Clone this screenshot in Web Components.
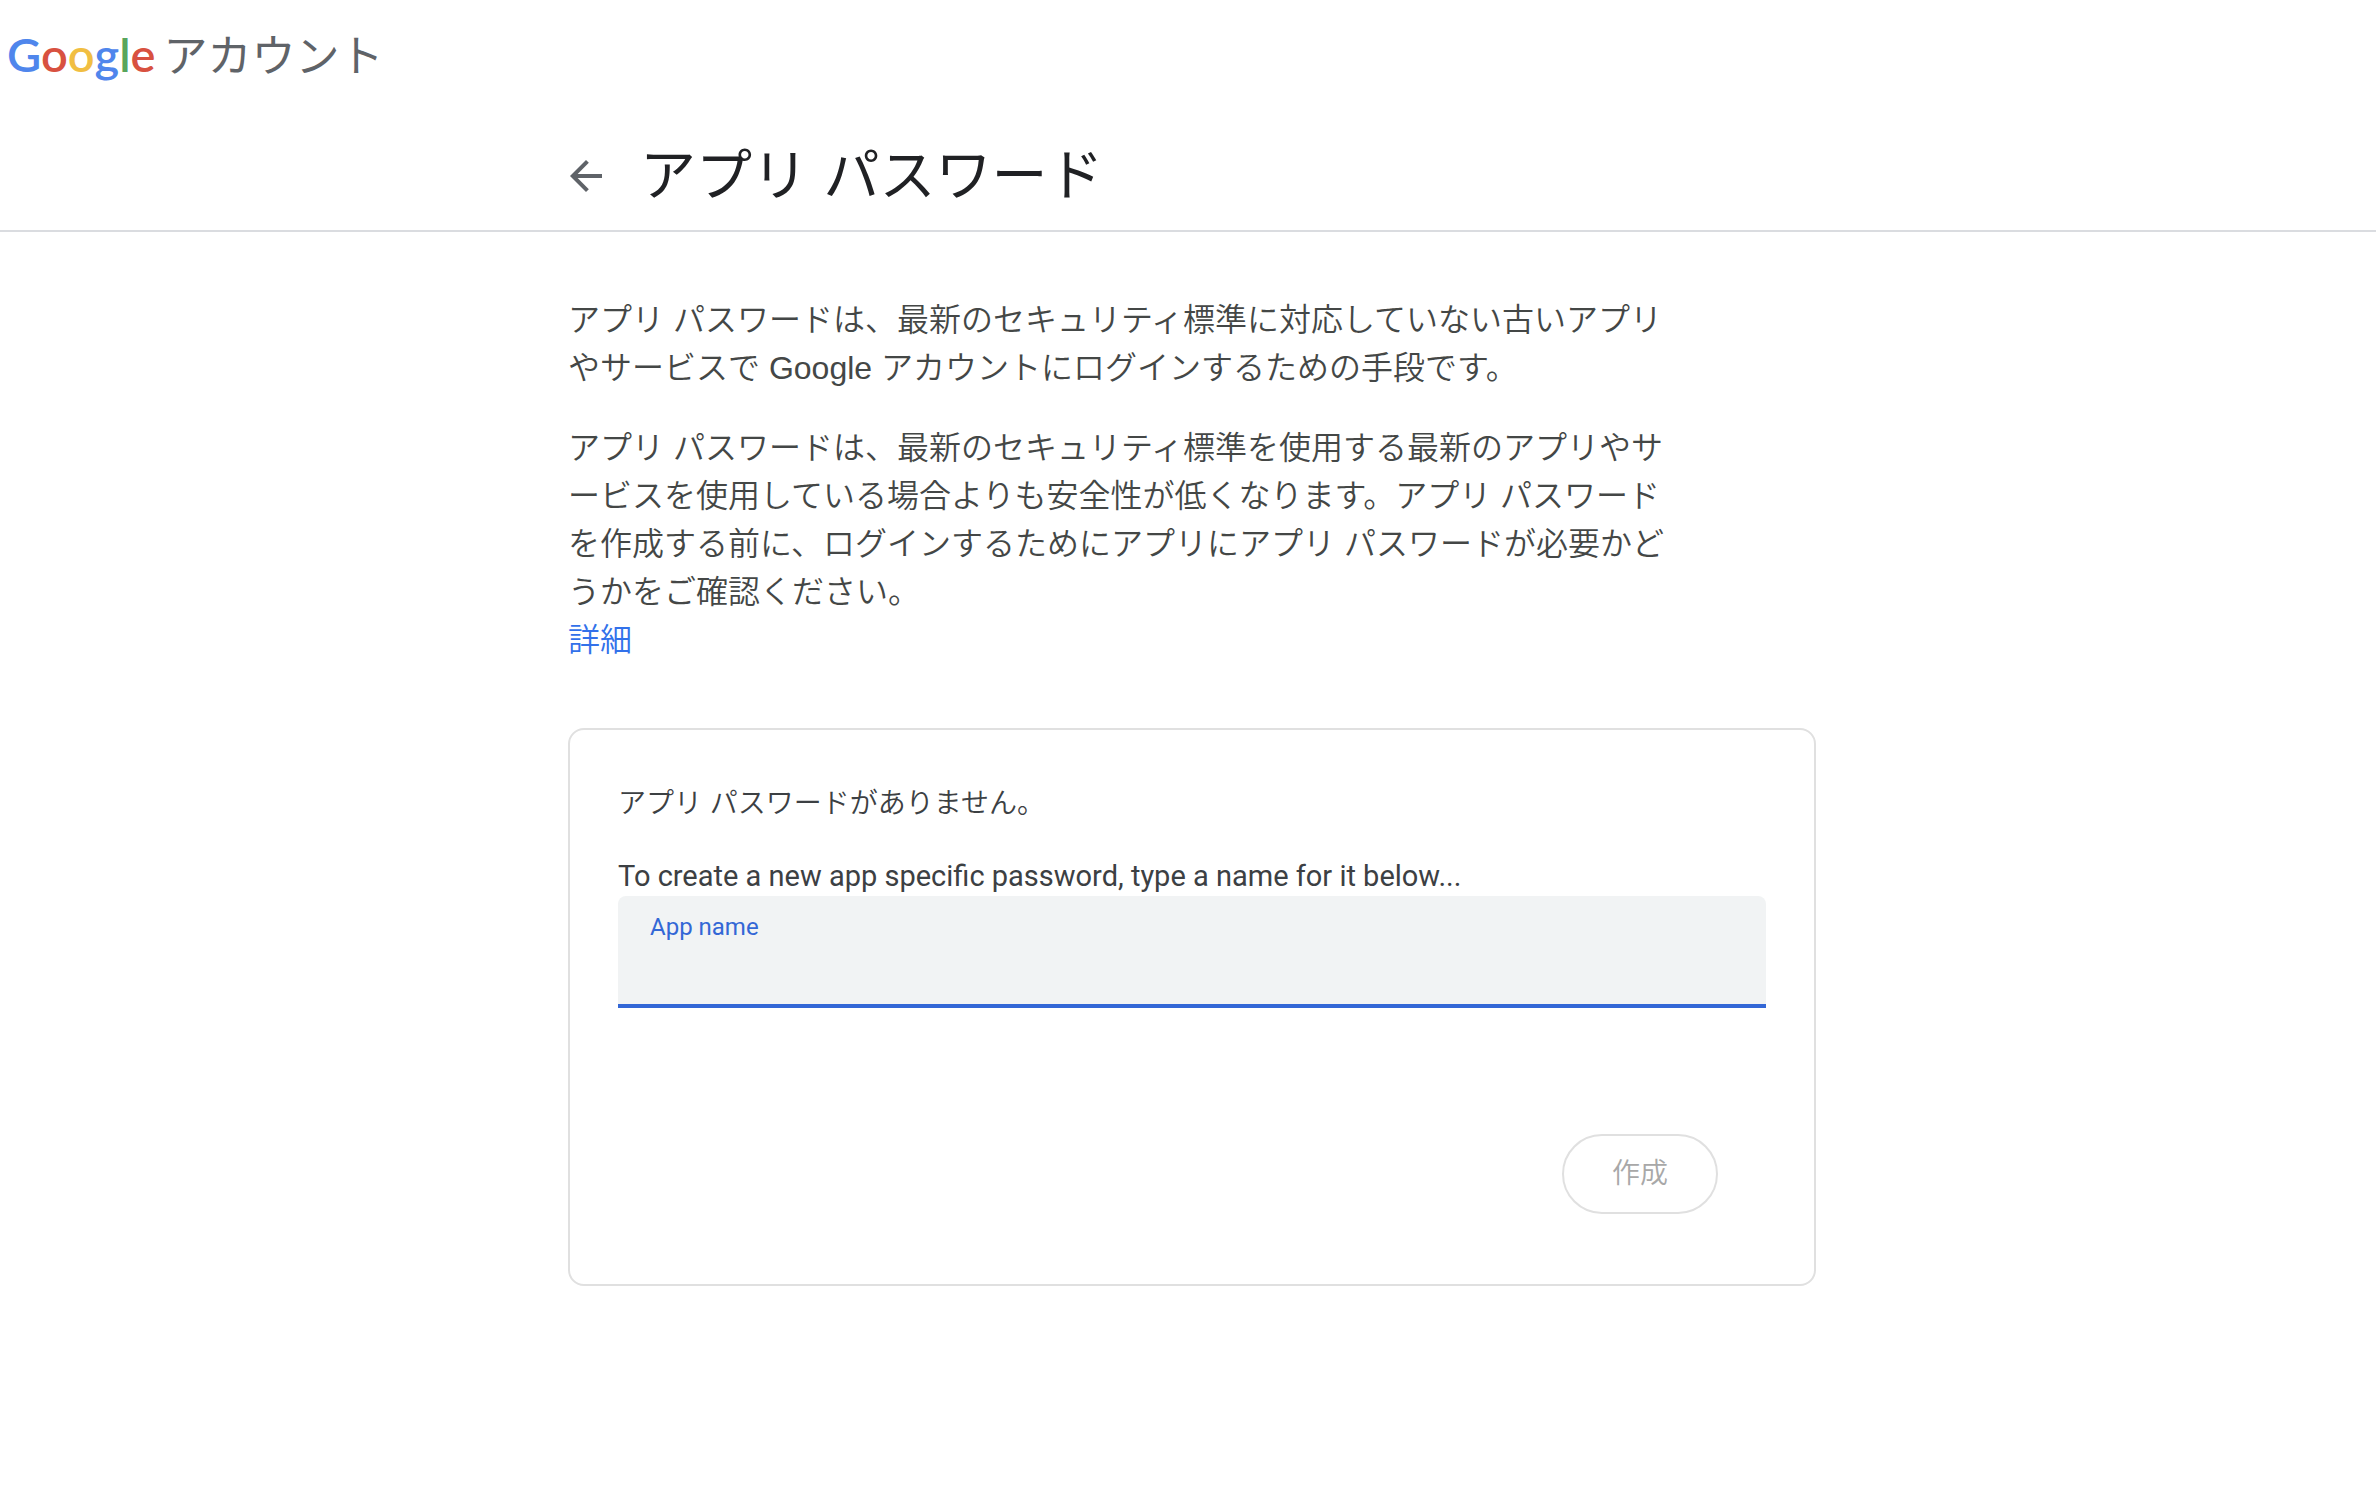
<!DOCTYPE html>
<html lang="ja">
<head>
<meta charset="utf-8">
<meta name="viewport" content="width=device-width, initial-scale=1">
<title>アプリ パスワード</title>
<style>
body {
  margin: 0;
  background: #fff;
  color: #444746;
  font-family: "Liberation Sans", "Noto Sans CJK JP", sans-serif;
  font-weight: 350;
  --color-line: #dadce0;
  --color-border: #e0e0e0;
  --color-accent: #3367d6;
  --column: 1256px;
}
</style>
</head>
<body>
<account-bar>アカウント</account-bar>
<page-heading>アプリ パスワード</page-heading>
<page-column>
  <intro-text>
    <p>アプリ パスワードは、最新のセキュリティ標準に対応していない古いアプリやサービスで Google アカウントにログインするための手段です。</p>
    <p>アプリ パスワードは、最新のセキュリティ標準を使用する最新のアプリやサービスを使用している場合よりも安全性が低くなります。アプリ パスワードを作成する前に、ログインするためにアプリにアプリ パスワードが必要かどうかをご確認ください。</p>
    <a slot="link" href="#details">詳細</a>
  </intro-text>
  <password-card>
    <span slot="status">アプリ パスワードがありません。</span>
    <span slot="hint">To create a new app specific password, type a name for it below...</span>
    <text-field label="App name"></text-field>
    <pill-button slot="action" disabled>作成</pill-button>
  </password-card>
</page-column>

<script>
/**
 * Top bar with the Google wordmark and the product name.
 * @extends HTMLElement
 */
class AccountBar extends HTMLElement {
  constructor() {
    super();
    this.attachShadow({ mode: 'open' });
  }

  connectedCallback() {
    this.shadowRoot.innerHTML = `
      <style>
        :host { display: block; }
        a {
          display: flex;
          align-items: baseline;
          gap: 8px;
          box-sizing: border-box;
          width: max-content;
          height: 112px;
          padding: 22px 7px 0;
          line-height: 64px;
          color: #5f6368;
          text-decoration: none;
        }
        .logo {
          font-family: Lato, sans-serif;
          font-size: 47px;
          font-weight: 600;
        }
        .name {
          font-size: 44px;
          font-weight: 400;
        }
        .blue { color: #4f86ec; }
        .red { color: #d85140; }
        .yellow { color: #f1be42; }
        .green { color: #58a55c; }
      </style>
      <a href="#account">
        <span class="logo"><span class="blue">G</span><span class="red">o</span><span class="yellow">o</span><span class="blue">g</span><span class="green">l</span><span class="red">e</span></span>
        <span class="name"><slot></slot></span>
      </a>`;
  }
}
customElements.define('account-bar', AccountBar);

/**
 * Page title with a back button, above a full width rule.
 * @extends HTMLElement
 */
class PageHeading extends HTMLElement {
  constructor() {
    super();
    this.attachShadow({ mode: 'open' });
  }

  connectedCallback() {
    this.shadowRoot.innerHTML = `
      <style>
        :host {
          display: block;
          border-bottom: 2px solid var(--color-line);
        }
        .row {
          display: flex;
          align-items: center;
          gap: 30px;
          box-sizing: border-box;
          max-width: var(--column);
          margin: 0 auto;
          padding: 16px 0 6px 2px;
        }
        button {
          display: flex;
          padding: 0;
          border: 0;
          background: none;
          color: #5f6368;
          cursor: pointer;
        }
        svg {
          width: 48px;
          height: 48px;
          fill: currentColor;
        }
        h1 {
          margin: 0;
          font-size: 56px;
          font-weight: 400;
          line-height: 96px;
          color: #202124;
        }
      </style>
      <div class="row">
        <button type="button" aria-label="戻る">
          <svg viewBox="0 0 24 24" aria-hidden="true"><path d="M20 11H7.83l5.59-5.59L12 4l-8 8 8 8 1.41-1.41L7.83 13H20v-2z"/></svg>
        </button>
        <h1><slot></slot></h1>
      </div>`;
  }
}
customElements.define('page-heading', PageHeading);

/**
 * Centred column for the page content.
 * @extends HTMLElement
 */
class PageColumn extends HTMLElement {
  constructor() {
    super();
    this.attachShadow({ mode: 'open' });
  }

  connectedCallback() {
    this.shadowRoot.innerHTML = `
      <style>
        :host {
          display: flex;
          flex-direction: column;
          gap: 64px;
          box-sizing: border-box;
          max-width: var(--column);
          margin: 0 auto;
          padding: 64px 0 64px 8px;
        }
      </style>
      <slot></slot>`;
  }
}
customElements.define('page-column', PageColumn);

/**
 * Introduction paragraphs, followed by a link.
 * @extends HTMLElement
 */
class IntroText extends HTMLElement {
  constructor() {
    super();
    this.attachShadow({ mode: 'open' });
  }

  connectedCallback() {
    this.shadowRoot.innerHTML = `
      <style>
        :host {
          display: block;
          max-width: 1104px;
          font-size: 32px;
          line-height: 48px;
          line-break: loose;
        }
        .body {
          display: flex;
          flex-direction: column;
          gap: 32px;
        }
        ::slotted(p) { margin: 0; }
        ::slotted(a) {
          color: #3271ea;
          text-decoration: none;
        }
      </style>
      <div class="body"><slot></slot></div>
      <slot name="link"></slot>`;
  }
}
customElements.define('intro-text', IntroText);

/**
 * Bordered card with the form for a new app password.
 * @extends HTMLElement
 */
class PasswordCard extends HTMLElement {
  constructor() {
    super();
    this.attachShadow({ mode: 'open' });
  }

  connectedCallback() {
    this.shadowRoot.innerHTML = `
      <style>
        :host {
          display: block;
          padding: 48px 48px 70px;
          border: 2px solid var(--color-border);
          border-radius: 16px;
          font-size: 28px;
          color: #3c4043;
        }
        p { margin: 0; }
        .status {
          margin-bottom: 28px;
          line-height: 52px;
        }
        .hint {
          padding-bottom: 2px;
          font-family: Roboto, sans-serif;
          font-size: 29px;
          font-weight: 400;
          line-height: 36px;
        }
        .actions {
          display: flex;
          justify-content: flex-end;
          margin-top: 126px;
          padding-right: 48px;
        }
      </style>
      <p class="status"><slot name="status"></slot></p>
      <p class="hint"><slot name="hint"></slot></p>
      <slot></slot>
      <div class="actions"><slot name="action"></slot></div>`;
  }
}
customElements.define('password-card', PasswordCard);

/**
 * Filled text field with its label above the value.
 * @extends HTMLElement
 */
class TextField extends HTMLElement {
  constructor() {
    super();
    this.attachShadow({ mode: 'open' });
  }

  connectedCallback() {
    this.shadowRoot.innerHTML = `
      <style>
        :host {
          display: block;
          border-radius: 8px 8px 0 0;
          background: #f1f3f4;
          font-family: Roboto, sans-serif;
          font-weight: 400;
        }
        label {
          display: block;
          padding: 16px 32px 0;
          font-size: 24px;
          line-height: 30px;
          color: var(--color-accent);
        }
        input {
          display: block;
          box-sizing: border-box;
          width: 100%;
          height: 66px;
          padding: 0 32px 12px;
          border: 0;
          border-bottom: 4px solid var(--color-accent);
          outline: 0;
          background: none;
          font: inherit;
          font-size: 32px;
          color: #202124;
        }
      </style>
      <label for="value">${this.getAttribute('label')}</label>
      <input id="value" type="text" autocomplete="off">`;
  }
}
customElements.define('text-field', TextField);

/**
 * Outlined pill button.
 * @extends HTMLElement
 */
class PillButton extends HTMLElement {
  constructor() {
    super();
    this.attachShadow({ mode: 'open' });
  }

  connectedCallback() {
    this.shadowRoot.innerHTML = `
      <style>
        :host { display: block; }
        button {
          display: block;
          padding: 18px 48px;
          border: 2px solid var(--color-border);
          border-radius: 40px;
          background: #fff;
          font: inherit;
          line-height: 40px;
          color: #3c4043;
        }
        button:disabled { color: #a8a8a8; }
      </style>
      <button type="button" ${this.hasAttribute('disabled') ? 'disabled' : ''}><slot></slot></button>`;
  }
}
customElements.define('pill-button', PillButton);
</script>
</body>
</html>
